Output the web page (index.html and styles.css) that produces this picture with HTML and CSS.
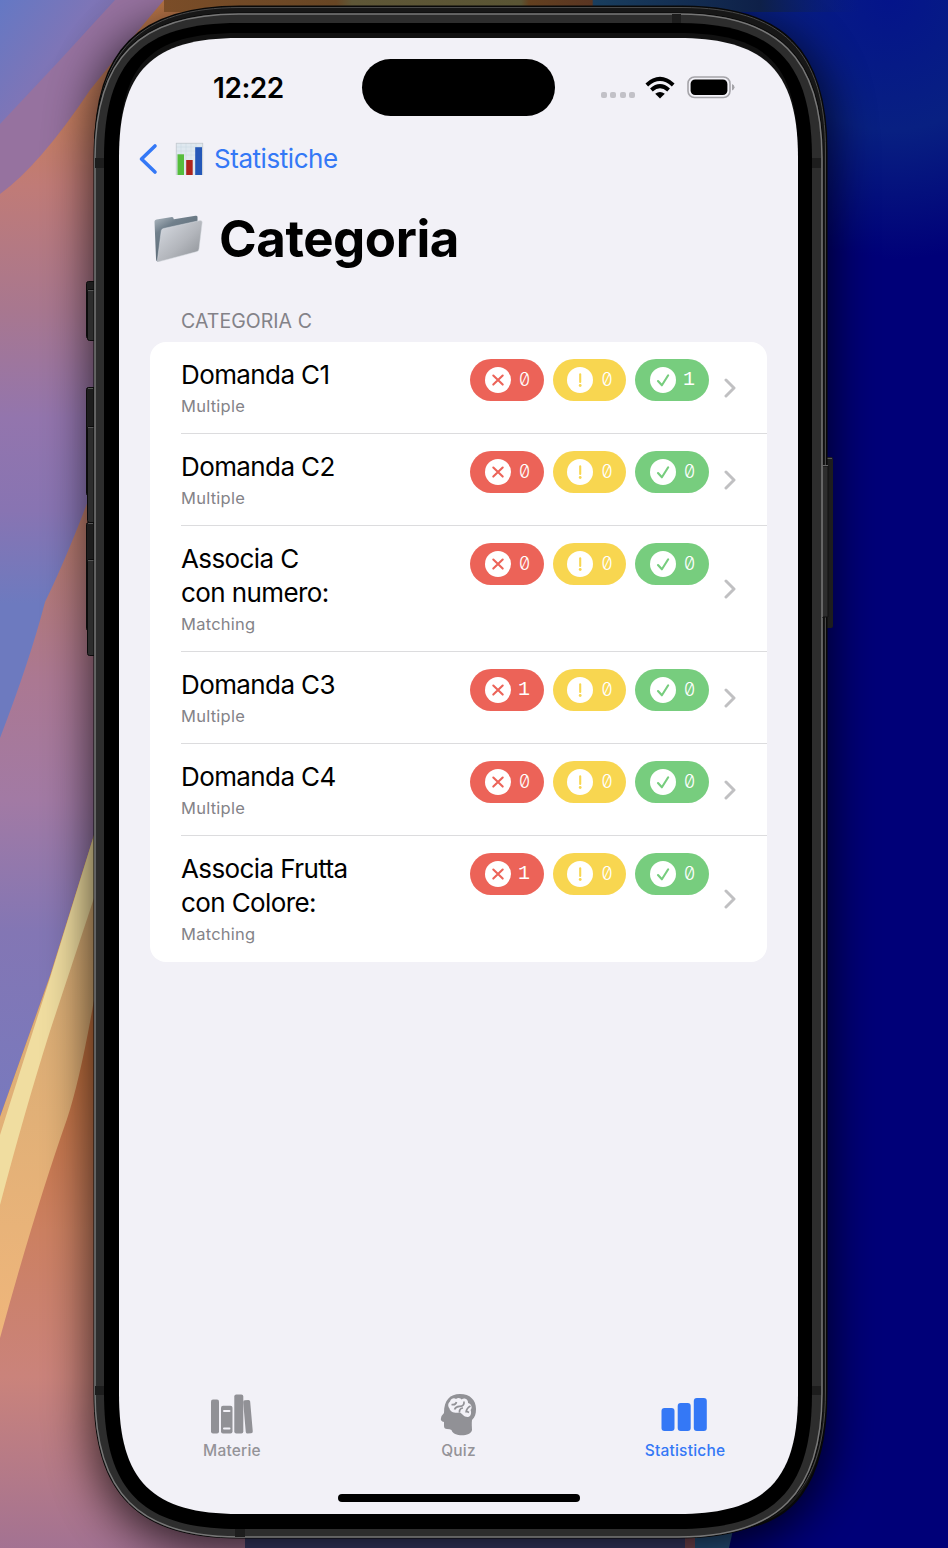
FILE: index.html
```
<!DOCTYPE html>
<html lang="it">
<head>
<meta charset="utf-8">
<title>Categoria</title>
<link rel="stylesheet" href="styles.css">
</head>
<body>
<svg class="backdrop" viewBox="0 0 948 1548" aria-hidden="true">
  <defs>
    <linearGradient id="base" x1="0" y1="0" x2="0" y2="1"><stop offset="0" stop-color="#bd7848"/><stop offset=".08" stop-color="#c47d62"/><stop offset=".12" stop-color="#c07b77"/><stop offset=".2" stop-color="#a8778f"/><stop offset=".27" stop-color="#9375ad"/><stop offset=".33" stop-color="#8874b2"/><stop offset=".39" stop-color="#6d7abf"/><stop offset="1" stop-color="#6d7abf"/></linearGradient>
    <linearGradient id="lower" x1="0" y1="500" x2="0" y2="1100" gradientUnits="userSpaceOnUse"><stop offset="0" stop-color="#b87963"/><stop offset=".3" stop-color="#ab7892"/><stop offset=".5" stop-color="#a27aa4"/><stop offset=".72" stop-color="#8376b4"/><stop offset="1" stop-color="#7979bd"/></linearGradient>
    <linearGradient id="blueTop" x1="0" y1="0" x2="1" y2=".8"><stop offset="0" stop-color="#6478c4"/><stop offset=".5" stop-color="#7e75b7"/><stop offset="1" stop-color="#6f6194"/></linearGradient>
    <linearGradient id="rust" x1="0" y1="1060" x2="0" y2="1548" gradientUnits="userSpaceOnUse"><stop offset="0" stop-color="#c3713f"/><stop offset=".35" stop-color="#cc8061"/><stop offset=".65" stop-color="#ca837b"/><stop offset="1" stop-color="#a37292"/></linearGradient>
    <linearGradient id="tan" x1="0" y1="900" x2="0" y2="1338" gradientUnits="userSpaceOnUse"><stop offset="0" stop-color="#d4aa73"/><stop offset="1" stop-color="#efb67b"/></linearGradient>
    <radialGradient id="glow" cx="890" cy="0" r="260" gradientUnits="userSpaceOnUse"><stop offset="0" stop-color="#04148a"/><stop offset=".5" stop-color="#082082"/><stop offset="1" stop-color="#000078"/></radialGradient>
    <linearGradient id="topStrip" x1="90" y1="0" x2="860" y2="0" gradientUnits="userSpaceOnUse"><stop offset="0" stop-color="#67405a" stop-opacity="0"/><stop offset=".09" stop-color="#7b4d28"/><stop offset=".32" stop-color="#684624"/><stop offset=".34" stop-color="#5f5737"/><stop offset=".56" stop-color="#5a5534"/><stop offset=".57" stop-color="#63401f"/><stop offset=".652" stop-color="#5a3522"/><stop offset=".654" stop-color="#193e5e"/><stop offset=".87" stop-color="#0e2048"/><stop offset="1" stop-color="#0b2078" stop-opacity="0"/></linearGradient>
    <filter id="soft" x="-20%" y="-10%" width="140%" height="120%"><feGaussianBlur stdDeviation="24"/></filter>
  </defs>
  <rect width="948" height="1548" fill="#000078"/>
  <rect x="590" width="358" height="400" fill="url(#glow)"/>
  <rect width="500" height="1548" fill="url(#base)"/>
  <path d="M0 738Q30 660 45 602Q68 555 94 485V1120H0z" fill="url(#lower)"/>
  <path d="M0 194Q40 165 90 90Q130 40 164 0H0z" fill="#96729f"/>
  <path d="M0 124Q30 92 60 60L115 0H0z" fill="url(#blueTop)"/>
  <path d="M0 1117L50 976L94 835H300V1548H0z" fill="url(#rust)"/>
  <path d="M0 1117L50 976L94 835V1000Q80 1080 67 1119Q35 1210 0 1338z" fill="url(#tan)"/>
  <path d="M0 1135Q30 1040 50 978L94 835V898L50 1031Q25 1110 0 1205z" fill="#f0dda0"/>
  <rect x="245" y="1530" width="440" height="18" fill="#3e4070"/>
  <rect x="685" y="1530" width="10" height="18" fill="#86505c"/>
  <path d="M695 1530H733L729 1548H695z" fill="#295889"/>
  <path d="M92 149C92 57 134 20 226 20H695C787 20 829 57 829 149V1415C829 1500 787 1550 695 1550H226C134 1550 92 1500 92 1415z" fill="#000" opacity=".74" filter="url(#soft)"/>
  <rect x="164" width="696" height="12" fill="url(#topStrip)"/>

  <g stroke="#0b0b0b" fill="#1d1d1d">
    <rect x="86.500" y="281.500" width="14" height="57" rx="2"/>
    <rect x="86.500" y="387.500" width="14" height="108" rx="2"/>
    <rect x="86.500" y="522.500" width="14" height="108" rx="2"/>
    <g fill="#2d2d2d"><rect x="87.500" y="289.500" width="12" height="51" rx="2"/><rect x="87.500" y="426.500" width="12" height="96" rx="2"/><rect x="87.500" y="559.500" width="12" height="96" rx="2"/></g>
  </g>
  <path d="M88 290.500H94M88 427.500H94M88 560.500H94M88 388.500H93M88 523.500H93" stroke="#555"/>
  <rect x="822" y="457" width="11" height="171" rx="2" fill="#1d1d1d"/>
  <path d="M827 458.500H832" stroke="#555"/>

  <path d="M95 151C95 50 139 6.500 240 6.500H682C783 6.500 826.500 50 826.500 151V1391C826.500 1481 795 1529 722 1530H240C139 1530 95 1486 95 1385z" fill="#171717" stroke="#080808" stroke-width="2"/>
  <path d="M96 151C96 51 140 7.500 240 7.500H682C782 7.500 825.500 51 825.500 151V1391C825.500 1450 810 1492 775 1512" fill="none" stroke="#494949"/>
  <path d="M94 158C94 57 138 13 239 13H678C779 13 823 57 823 158V1393C823 1494 779 1538 678 1538H239C138 1538 94 1494 94 1393z" fill="#2d2d2d" stroke="#090909"/>
  <path d="M95 158C95 58 139 14 239 14H678C778 14 822 58 822 158V1393C822 1493 778 1537 678 1537H239C139 1537 95 1493 95 1393z" fill="none" stroke="#777" stroke-width="1.500"/>
  <path d="M95 158H104V168H95zM812 158H821V168H812zM672 14H681V23H672zM95 1386H104V1395H95zM812 1386H821V1395H812zM235 1529H245V1537H235z" fill="#1d1d1d"/>
  <path d="M822 466H828V617H822" fill="#2d2d2d" stroke="#111"/><path d="M822.500 466V617M822 465.500H828" stroke="#666"/>
  <path d="M104 158C104 61 142 23 239 23H678C774 23 812 61 812 158V1393C812 1491 774 1529 678 1529H239C142 1529 104 1491 104 1393z" fill="#000"/>
  <path d="M119 158C119 66 147 33 239 33H678C770 33 798 66 798 158z" fill="#111"/>
  <path d="M119 158C119 71 152 38 239 38H678C765 38 798 71 798 158V1394C798 1481 765 1514 678 1514H239C152 1514 119 1481 119 1394z" fill="#f2f1f7"/>
</svg>

<svg class="symbols" aria-hidden="true">
  <symbol id="cross" viewBox="0 0 26 26"><circle cx="13" cy="13" r="13" fill="#fff" stroke="none"/><path d="M8.300 8.600l9.400 9M17.700 8.600l-9.400 9"/></symbol>
  <symbol id="bang" viewBox="0 0 26 26"><circle cx="13" cy="13" r="13" fill="#fff" stroke="none"/><path d="M13.200 7.400v7.600"/><path d="M13.200 18.500v.1" stroke-width="2.800"/></symbol>
  <symbol id="tick" viewBox="0 0 26 26"><circle cx="13" cy="13" r="13" fill="#fff" stroke="none"/><path d="M8 14l3.900 4.300l6.300-10"/></symbol>
  <symbol id="next" viewBox="0 0 12 20"><path d="M2 2l8 8l-8 8"/></symbol>
</svg>

<main class="screen">
  <header class="status">
    <span class="clock">12:22</span>
    <span class="island"></span>
    <span class="signal"><i></i><i></i><i></i><i></i></span>
    <svg class="wifi" viewBox="0 0 30 22"><g fill="none" stroke="#000" stroke-width="4"><path d="M1.800 7.900Q15-4 28.200 7.900"/><path d="M6.400 13Q15 5.300 23.600 13"/></g><path d="M15 21.500L10.200 16.800Q15 13.100 19.800 16.800z"/></svg>
    <svg class="battery" viewBox="0 0 48 23"><rect x="1" y="1" width="42" height="20.500" rx="6.500" fill="none" stroke="#a5a4a9" stroke-width="1.600"/><rect x="3.600" y="3.500" width="36.800" height="15.500" rx="4.500"/><path d="M45 8Q47.500 9 47.500 11.300T45 14.600z" fill="#a5a4a9"/></svg>
  </header>

  <nav class="back">
    <svg class="back-arrow" viewBox="0 0 18 30"><path d="M16 2L2.500 15L16 28"/></svg>
    <svg class="chart" viewBox="0 0 27 32"><rect width="27" height="32" fill="#dfe8ef"/><path d="M0 4H27M0 8H27M0 12H27M5 0V32M10 0V32M15 0V32M20 0V32" stroke="#cedae4" stroke-width=".6"/><path d="M.3 0V32M26.700 0V32M0 .3H27" stroke="#c3c8ce" stroke-width=".8"/><path d="M1.500 11.300H8V32H1.500z" fill="#55bd3c"/><path d="M10.200 17H16.700V32H10.200z" fill="#ae241d"/><path d="M19.200 4.200H26V32H19.200z" fill="#2457b8"/></svg>
    <span class="back-label">Statistiche</span>
  </nav>

  <h1 class="title">
    <svg class="folder" viewBox="0 0 50 48"><defs><linearGradient id="fold" x1="0" y1="0" x2="1" y2="1"><stop offset="0" stop-color="#d9dde4"/><stop offset=".55" stop-color="#b3b6bc"/><stop offset="1" stop-color="#898d92"/></linearGradient><linearGradient id="foldBack" x1="0" y1="0" x2=".6" y2="1"><stop offset="0" stop-color="#b4bdc5"/><stop offset=".3" stop-color="#71808c"/><stop offset="1" stop-color="#54616d"/></linearGradient></defs><path d="M.5 6.500Q.5 5 2.500 4.600L18 2Q19.500 2 19.800 4.300L41.500.8Q43.500.6 43.500 2V16L5.500 46Q2 48 2 43z" fill="url(#foldBack)"/><path d="M7.300 15.500Q7.700 14 9.500 13.500L46 5.500Q48.500 5.200 48.200 7.500L45 34Q44.700 36 43 36.600L5.500 46.500Q2.900 47.300 3.500 44.500z" fill="url(#fold)" stroke="#d9dde2" stroke-width=".5"/></svg>
    <span>Categoria</span>
  </h1>

  <h2 class="section">CATEGORIA C</h2>
  <ul class="card">
    <li class="row"><div class="info"><p class="name">Domanda C1</p><p class="kind">Multiple</p></div><div class="pills"><span class="pill red"><svg><use href="#cross"/></svg>0</span><span class="pill yellow"><svg><use href="#bang"/></svg>0</span><span class="pill green one"><svg><use href="#tick"/></svg>1</span></div><svg class="chevron"><use href="#next"/></svg></li>
    <li class="row"><div class="info"><p class="name">Domanda C2</p><p class="kind">Multiple</p></div><div class="pills"><span class="pill red"><svg><use href="#cross"/></svg>0</span><span class="pill yellow"><svg><use href="#bang"/></svg>0</span><span class="pill green"><svg><use href="#tick"/></svg>0</span></div><svg class="chevron"><use href="#next"/></svg></li>
    <li class="row"><div class="info"><p class="name">Associa C<br>con numero:</p><p class="kind">Matching</p></div><div class="pills"><span class="pill red"><svg><use href="#cross"/></svg>0</span><span class="pill yellow"><svg><use href="#bang"/></svg>0</span><span class="pill green"><svg><use href="#tick"/></svg>0</span></div><svg class="chevron"><use href="#next"/></svg></li>
    <li class="row"><div class="info"><p class="name">Domanda C3</p><p class="kind">Multiple</p></div><div class="pills"><span class="pill red one"><svg><use href="#cross"/></svg>1</span><span class="pill yellow"><svg><use href="#bang"/></svg>0</span><span class="pill green"><svg><use href="#tick"/></svg>0</span></div><svg class="chevron"><use href="#next"/></svg></li>
    <li class="row"><div class="info"><p class="name">Domanda C4</p><p class="kind">Multiple</p></div><div class="pills"><span class="pill red"><svg><use href="#cross"/></svg>0</span><span class="pill yellow"><svg><use href="#bang"/></svg>0</span><span class="pill green"><svg><use href="#tick"/></svg>0</span></div><svg class="chevron"><use href="#next"/></svg></li>
    <li class="row"><div class="info"><p class="name">Associa Frutta<br>con Colore:</p><p class="kind">Matching</p></div><div class="pills"><span class="pill red one"><svg><use href="#cross"/></svg>1</span><span class="pill yellow"><svg><use href="#bang"/></svg>0</span><span class="pill green"><svg><use href="#tick"/></svg>0</span></div><svg class="chevron"><use href="#next"/></svg></li>
  </ul>

  <footer class="tabs">
    <div class="tab"><svg viewBox="0 0 46 44"><rect x="2" y="6.500" width="8" height="34" rx="2"/><rect x="12" y="12.800" width="11.500" height="27.700" rx="2"/><rect x="25.300" y="1.500" width="9" height="39" rx="2"/><rect x="35.500" y="7" width="7" height="33.500" rx="1.800" transform="rotate(-5 39 24)"/><path d="M15 18H20.500M15 35.500H20.500" stroke="#f2f1f7" stroke-width="2" stroke-linecap="round"/></svg><span>Materie</span></div>
    <div class="tab"><svg viewBox="0 0 46 44"><path d="M8 20C8 7 14 1 24 1C34 1 40 7 40 16C40 21 39 24 36 27C35.500 31 36 34 36 37C35 44 17 44 15.500 37Q14 36 11 36Q8 36 8 33V29Q4 28 5 25Q5 23 8 20z"/><path d="M14 8.500C15 5 18.500 4.600 20 6C22 4 25 5 25.500 6.500C29 4 32.500 7 32 10C36 11 36.500 15 34.500 17C36 20 34.500 24.500 31.500 24C27.500 24 27 21 23.500 19.500C19 20.500 14 19 13.500 15.500C11.500 13 12 10 14 8.500z" fill="#f2f1f7"/><path d="M15.500 11.500Q19.500 12.500 20.500 9M18.500 16.500Q20 13 24 13.300Q28.500 13 28 8.500M23.500 19.500Q23 15.500 27 15M34.500 13Q30.500 15 30 19.500M30 18L33 19.500" fill="none" stroke="#919196" stroke-width="1.700"/></svg><span>Quiz</span></div>
    <div class="tab active"><svg viewBox="0 0 46 44"><rect x="-.5" y="15" width="13" height="23" rx="3"/><rect x="15.700" y="10" width="13" height="28" rx="3"/><rect x="31.800" y="5" width="13" height="33" rx="3"/></svg><span>Statistiche</span></div>
  </footer>
  <div class="home"></div>
</main>
</body>
</html>
```
FILE: styles.css
```
* { box-sizing: border-box; }
body {
  margin: 0;
  width: 948px;
  height: 1548px;
  overflow: hidden;
  position: relative;
  background: #000078;
  font-family: Inter, "Liberation Sans", sans-serif;
  color: #000;
}
svg { display: block; flex: none; overflow: visible; }
.backdrop { position: absolute; inset: 0; width: 948px; height: 1548px; overflow: hidden; }
.symbols { position: absolute; width: 0; height: 0; }
.screen {
  position: relative;
  width: 679px;
  height: 1514px;
  margin-left: 119px;
  padding-top: 59px;
  display: flex;
  flex-direction: column;
}
.status { display: flex; align-items: center; height: 57px; padding-left: 94px; }
.clock { width: 148.500px; font-size: 28px; font-weight: 600; letter-spacing: -.45px; }
.island { width: 193.500px; height: 57px; border-radius: 29px; background: #000; }
.signal { display: flex; gap: 3.300px; margin: 15px 0 0 46px; }
.signal i { width: 6px; height: 6px; border-radius: 2px; background: #c2c1c7; }
.wifi { width: 30px; height: 22px; margin: 0 0 0 10.500px; }
.battery { width: 48px; height: 23px; margin-left: 11.500px; }

.back { display: flex; align-items: center; height: 40px; margin-top: 23px; padding-left: 20px; }
.back-arrow { width: 18px; height: 30px; fill: none; stroke: #3478f6; stroke-width: 3.600; stroke-linecap: round; stroke-linejoin: round; }
.chart { width: 27px; height: 32px; margin-left: 19px; }
.back-label { margin-left: 11px; margin-top: -1px; font-size: 26px; letter-spacing: -.45px; color: #3478f6; }

.title { display: flex; align-items: center; height: 70px; margin: 26px 0 0; padding-left: 35px; font-size: 51px; font-weight: 700; letter-spacing: -.45px; }
.title span { margin-top: -3px; }
.folder { width: 50px; height: 48px; margin-right: 15px; margin-top: -3px; }
.section { margin: 33px 0 0 62px; height: 34px; line-height: 26px; font-size: 19.500px; font-weight: 400; letter-spacing: .05px; color: #838288; }

.card { list-style: none; width: 617px; margin: 0 0 0 31px; padding: 0; border-radius: 16px; background: #fff; }
.row { position: relative; display: flex; align-items: flex-start; padding: 16px 31px 17px; }
.row + .row::before { content: ""; position: absolute; top: -1px; left: 31px; right: 0; height: 1px; background: #dcdcde; }
.info { width: 289.300px; }
.info p { margin: 0; }
.name { font-size: 26px; line-height: 34px; letter-spacing: -.6px; }
.kind { padding-top: 3px; font-size: 16.500px; line-height: 22px; letter-spacing: .25px; color: #848388; }
.pills { display: flex; gap: 9px; padding-top: .5px; }
.pill {
  display: flex;
  align-items: center;
  width: 73.500px;
  height: 42px;
  padding-left: 14.500px;
  border-radius: 21px;
  color: #fff;
  font: 300 18px/42px Inter, sans-serif;
  font-feature-settings: "zero" 1;
}
.pill svg { width: 26px; height: 26px; margin-right: 8.500px; fill: none; stroke-width: 2.100; stroke-linecap: round; stroke-linejoin: round; }
.one { font: 20px/42px "Liberation Mono", monospace; }
.one svg { margin-right: 7.500px; }
.red { background: #ec6358; stroke: #ec6358; }
.yellow { background: #f8d650; stroke: #f8d650; }
.green { background: #77cd7e; stroke: #77cd7e; }
.chevron { align-self: center; width: 12px; height: 20px; margin-left: 15.500px; fill: none; stroke: #c0c0c2; stroke-width: 3; stroke-linecap: round; stroke-linejoin: round; }

.tabs { display: flex; justify-content: space-between; margin-top: auto; height: 68px; }
.tab { width: 226px; display: flex; flex-direction: column; align-items: center; fill: #919196; color: #949398; font-size: 15.500px; font-weight: 500; letter-spacing: .2px; }
.tab svg { width: 46px; height: 44px; }
.tab span { margin-top: 4px; line-height: 20px; }
.active { fill: #3478f6; color: #3478f6; }
.home { width: 242px; height: 8px; margin: 33px auto 12px; border-radius: 4px; background: #000; }
```
